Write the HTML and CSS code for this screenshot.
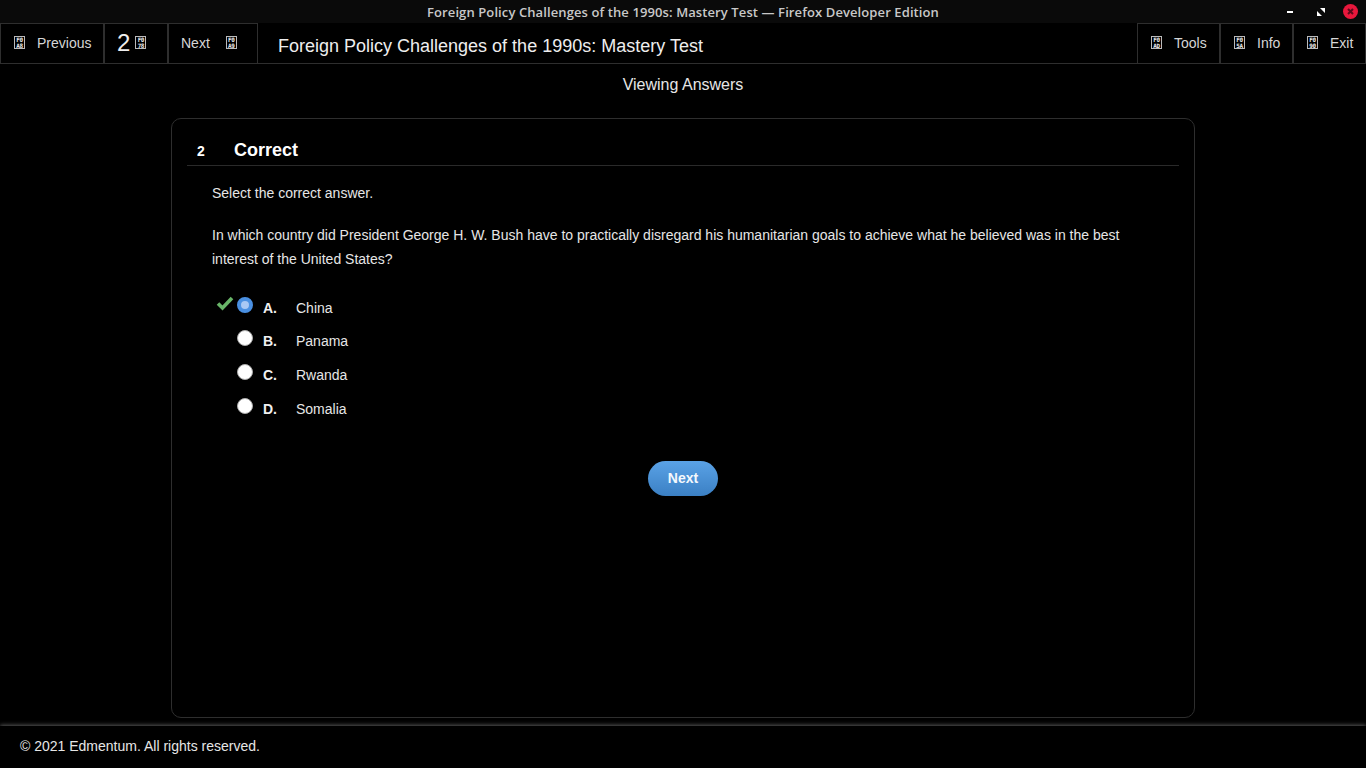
FILE: index.html
```html
<!DOCTYPE html>
<html lang="en">
<head>
<meta charset="utf-8">
<title>Foreign Policy Challenges of the 1990s: Mastery Test</title>
<link rel="stylesheet" href="styles.css">
</head>
<body>
<div class="titlebar">
  <span class="titlebar-text">Foreign Policy Challenges of the 1990s: Mastery Test — Firefox Developer Edition</span>
  <div class="win-controls">
    <span class="win-min"></span>
    <svg class="win-max" width="8" height="8" viewBox="0 0 8 8"><path d="M3 0h5v5zM0 3l5 5H0z" fill="#fff"/></svg>
    <span class="win-close"><svg width="15" height="15" viewBox="0 0 15 15"><path d="M5 5l5 5M10 5l-5 5" stroke="#5c0a1c" stroke-width="2"/></svg></span>
  </div>
</div>
<header class="toolbar">
  <div class="tb-btn tb-prev"><span class="tofu"><i>F0</i><i>A8</i></span><span>Previous</span></div>
  <div class="tb-btn tb-num"><span class="num">2</span><span class="tofu"><i>F0</i><i>78</i></span></div>
  <div class="tb-btn tb-next"><span>Next</span><span class="tofu"><i>F0</i><i>A9</i></span></div>
  <h1 class="tb-title">Foreign Policy Challenges of the 1990s: Mastery Test</h1>
  <div class="tb-btn tb-tools"><span class="tofu"><i>F0</i><i>AD</i></span><span>Tools</span></div>
  <div class="tb-btn tb-info"><span class="tofu"><i>F0</i><i>5A</i></span><span>Info</span></div>
  <div class="tb-btn tb-exit"><span class="tofu"><i>F0</i><i>90</i></span><span>Exit</span></div>
</header>
<div class="viewing">Viewing Answers</div>
<main class="card">
  <div class="card-head"><span class="q-num">2</span><h2 class="q-status">Correct</h2></div>
  <div class="card-body">
    <p class="instr">Select the correct answer.</p>
    <p class="question">In which country did President George H. W. Bush have to practically disregard his humanitarian goals to achieve what he believed was in the best interest of the United States?</p>
    <div class="options">
      <div class="option opt-a">
        <svg class="check" width="18" height="16" viewBox="0 0 18 16"><path d="M2 8.5l4.5 4.5L16 3" fill="none" stroke="#69b569" stroke-width="3.6"/></svg>
        <span class="radio radio-on"></span><b class="letter">A.</b><span>China</span>
      </div>
      <div class="option opt-b"><span class="radio"></span><b class="letter">B.</b><span>Panama</span></div>
      <div class="option opt-c"><span class="radio"></span><b class="letter">C.</b><span>Rwanda</span></div>
      <div class="option opt-d"><span class="radio"></span><b class="letter">D.</b><span>Somalia</span></div>
    </div>
    <div class="next-wrap"><button class="next-btn">Next</button></div>
  </div>
</main>
<footer class="footer">© 2021 Edmentum. All rights reserved.</footer>
</body>
</html>
```
FILE: styles.css
```css
* { box-sizing: border-box; }
html, body { margin: 0; padding: 0; }
body {
  width: 1366px;
  height: 768px;
  overflow: hidden;
  background: #000;
  color: #eee;
  font-family: "Liberation Sans", Arial, sans-serif;
  font-size: 14px;
  display: flex;
  flex-direction: column;
}
.titlebar {
  height: 23px;
  flex: none;
  padding-top: 2px;
  background: #0a0a0a;
  display: flex;
  align-items: center;
  justify-content: center;
  position: relative;
}
.titlebar-text {
  font-family: "Open Sans", sans-serif;
  font-weight: 600;
  font-size: 13px;
  letter-spacing: 0.1px;
  color: #c8c8c8;
  line-height: 21px;
}
.win-controls {
  position: absolute;
  top: 4px;
  right: 8px;
  display: flex;
  align-items: center;
}
.win-min { width: 6px; height: 2px; background: #fff; margin-right: 24px; }
.win-max { margin-right: 18px; display: block; }
.win-close {
  width: 15px; height: 15px; border-radius: 50%;
  background: #e8173c; display: block;
}
.win-close svg { display: block; }
.toolbar {
  height: 41px;
  flex: none;
  display: flex;
  align-items: stretch;
  background: #000;
  border-bottom: 1px solid #2e2e2e;
}
.tb-btn {
  display: flex;
  align-items: center;
  border: 1px solid #2e2e2e;
  border-bottom: 0;
  padding-bottom: 2px;
  color: #d6d6d6;
  font-size: 14px;
  flex: none;
}
.tb-prev { width: 104px; padding-left: 13px; gap: 12px; }
.tb-num { width: 64px; padding-left: 12px; gap: 5px; }
.tb-next { width: 90px; padding-left: 12px; gap: 16px; }
.tb-tools { width: 83px; padding-left: 13px; gap: 12px; }
.tb-info { width: 73px; padding-left: 13px; gap: 12px; }
.tb-exit { width: 73px; padding-left: 13px; gap: 12px; }
.num { font-size: 24px; color: #eee; }
.tofu {
  width: 11px;
  height: 13px;
  border: 1px solid #bbb;
  display: inline-flex;
  flex-direction: column;
  align-items: center;
  justify-content: center;
  font-family: "DejaVu Sans Mono", monospace;
  font-weight: 700;
  font-size: 6px;
  line-height: 5.5px;
  color: #eee;
  flex: none;
}
.tofu i { font-style: normal; display: block; letter-spacing: -0.4px; }
.tb-title {
  flex: 1;
  margin: 0;
  padding-left: 20px;
  font-size: 18px;
  font-weight: 400;
  color: #eee;
  line-height: 46px;
  white-space: nowrap;
}
.viewing {
  height: 54px;
  flex: none;
  text-align: center;
  font-size: 16px;
  line-height: 41px;
  color: #e6e6e6;
}
.card {
  width: 1024px;
  height: 600px;
  margin-left: 171px;
  flex: none;
  border: 1px solid #2e2e2e;
  border-radius: 10px;
  padding: 0 15px;
}
.card-head {
  height: 47px;
  border-bottom: 1px solid #2a2a2a;
  display: flex;
  align-items: baseline;
  padding-top: 21px;
}
.q-num { font-weight: 700; font-size: 14px; width: 47px; padding-left: 10px; color: #fff; }
.q-status { margin: 0; font-size: 18px; font-weight: 700; color: #fff; }
.card-body { padding: 15px 25px 0; }
.instr { margin: 0 0 18px; line-height: 24px; color: #e6e6e6; }
.question { margin: 0 0 20px; line-height: 24px; color: #e6e6e6; }
.options { display: flex; flex-direction: column; }
.option {
  height: 34px;
  display: flex;
  align-items: center;
  padding-left: 25px;
  position: relative;
  color: #e6e6e6;
}
.opt-a { height: 33px; }
.check { position: absolute; left: 4px; top: 4px; }
.radio {
  width: 16px; height: 16px; border-radius: 50%;
  background: #fff;
  border: 1px solid #aaa;
  margin-right: 10px;
  margin-top: -6px;
  flex: none;
}
.radio-on { background: #a9c8f4; border: 4px solid #4a90e2; }
.letter { width: 33px; color: #f0f0f0; }
.next-wrap { display: flex; justify-content: center; margin-top: 35px; }
.next-btn {
  width: 70px; height: 35px;
  border: 0;
  padding: 0 0 2px;
  border-radius: 18px;
  background: linear-gradient(#5aa2e6, #3b80c4);
  color: #f4f8fc;
  font: 700 14px "Liberation Sans", Arial, sans-serif;
}
.footer {
  margin-top: 8px;
  flex: 1;
  padding-left: 20px;
  font-size: 14px;
  line-height: 40px;
  color: #e6e6e6;
  background: #000;
  box-shadow: 0 -1px 4px rgba(255, 255, 255, 0.35);
}
```
